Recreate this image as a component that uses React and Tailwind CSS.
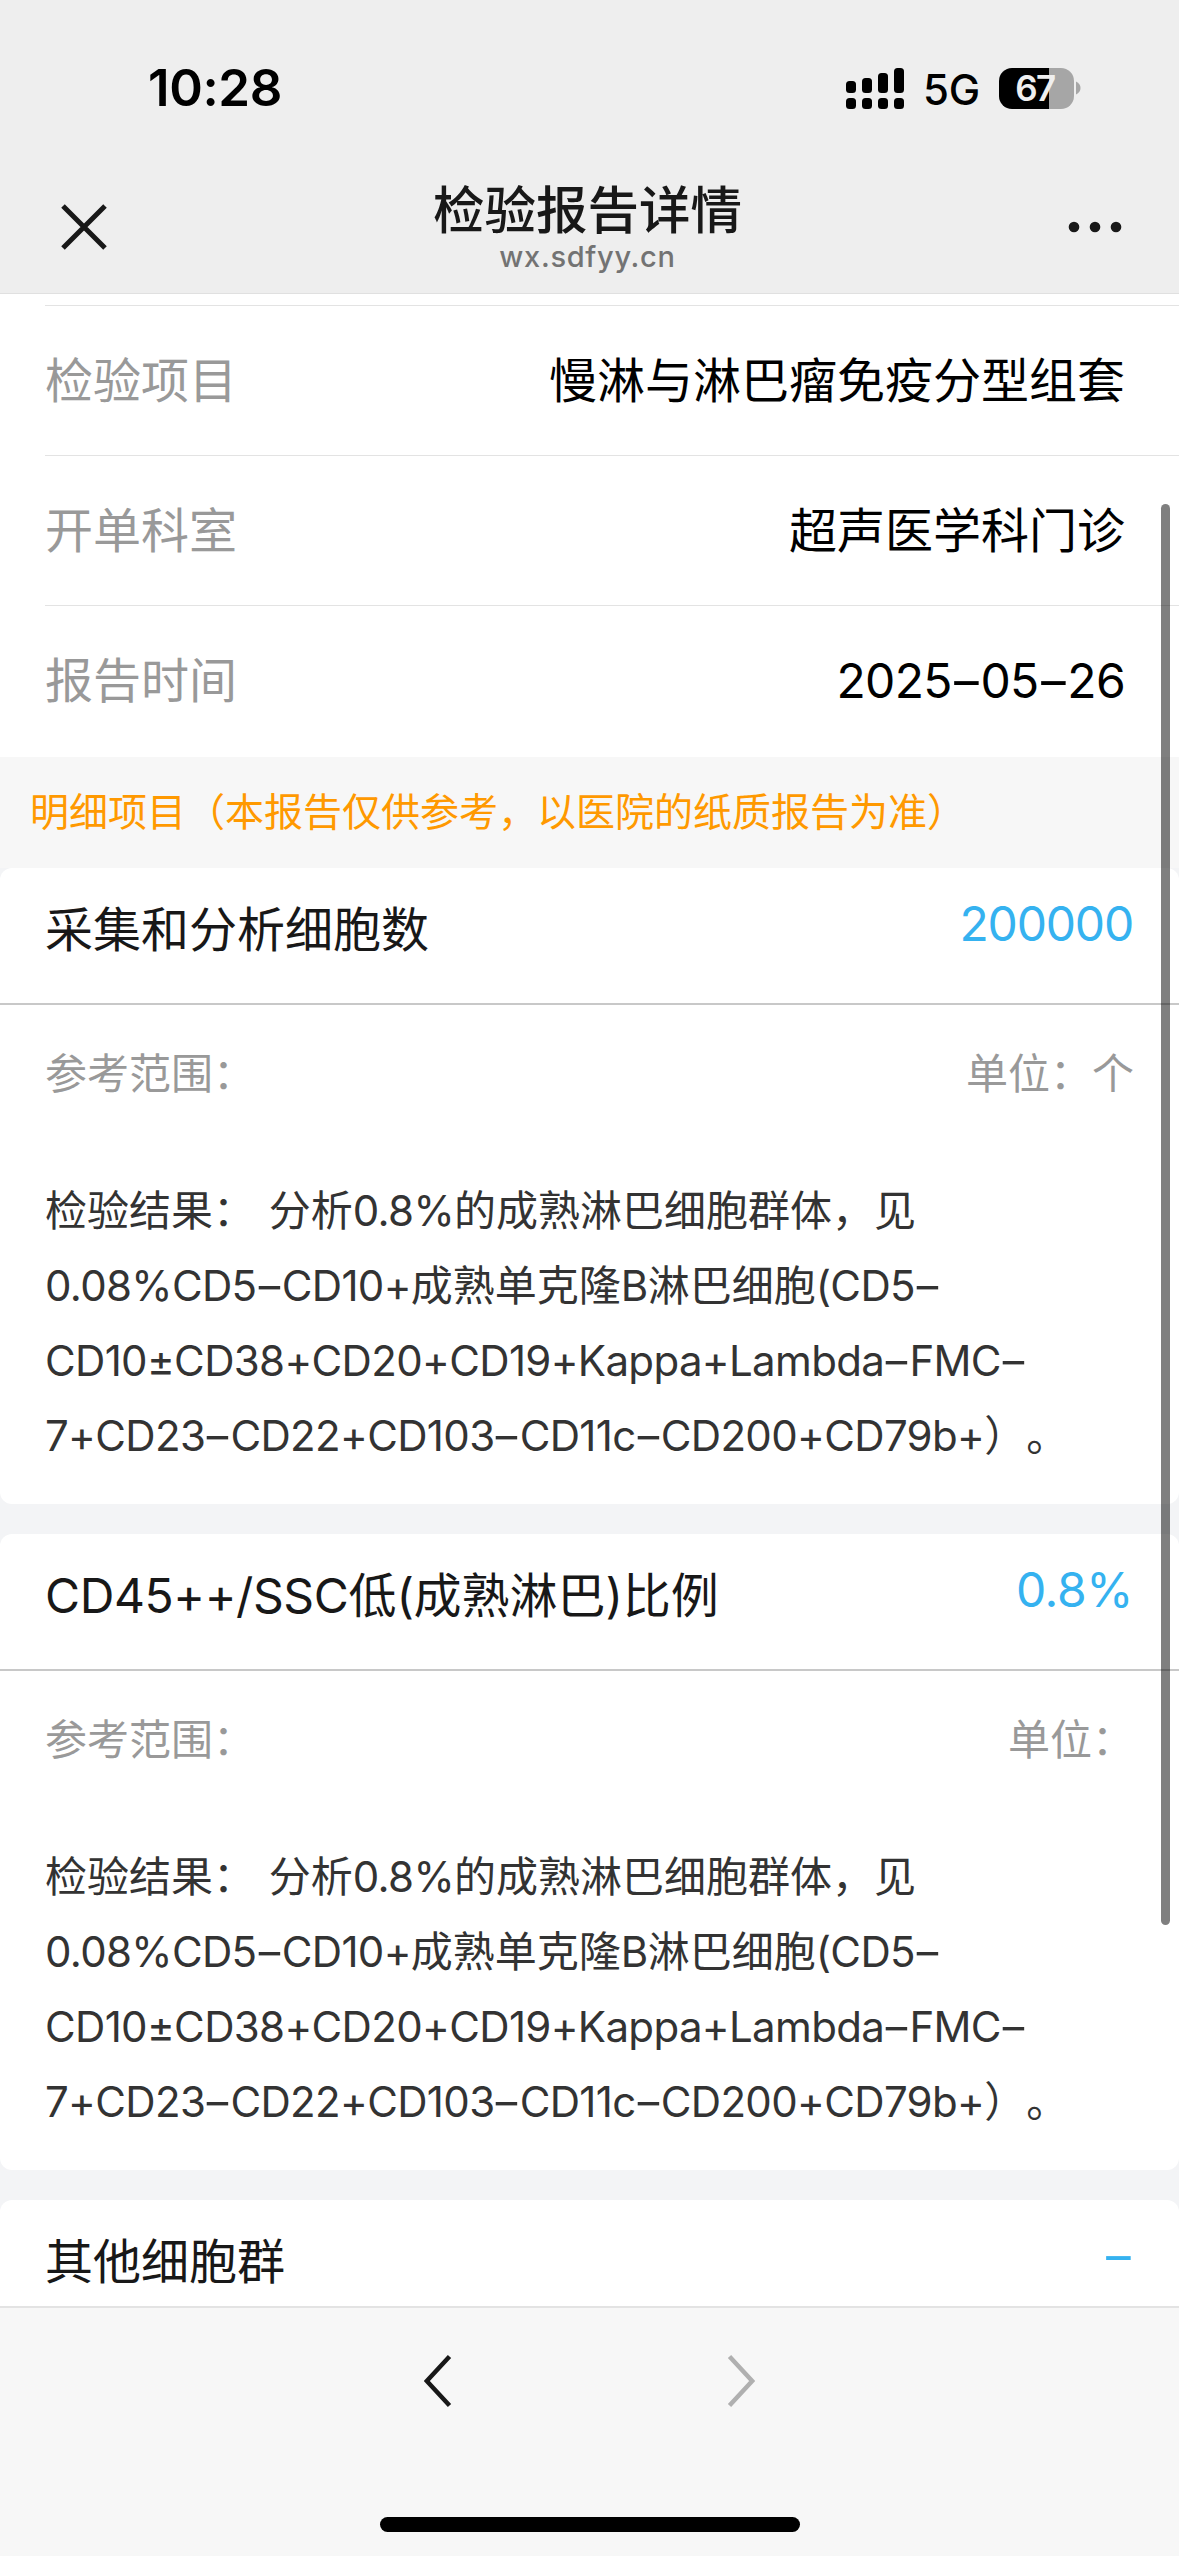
import React from "react";

const infoRows = [
  { label: "检验项目", value: "慢淋与淋巴瘤免疫分型组套" },
  { label: "开单科室", value: "超声医学科门诊" },
  { label: "报告时间", value: "2025-05-26" },
];

const resultLines = [
  "检验结果： 分析0.8%的成熟淋巴细胞群体，见",
  "0.08%CD5-CD10+成熟单克隆B淋巴细胞(CD5-",
  "CD10±CD38+CD20+CD19+Kappa+Lambda-FMC-",
  "7+CD23-CD22+CD103-CD11c-CD200+CD79b+）。",
];

const cards = [
  { name: "采集和分析细胞数", value: "200000", unit: "个", tight: "tracking-[-1.2px]" },
  { name: "CD45++/SSC低(成熟淋巴)比例", value: "0.8%", unit: "", tight: "tracking-[-0.4px]" },
];

// Latin runs get slightly tighter tracking; hyphens are drawn as wide as a digit.
function Mixed({ text, tight = "tracking-[-0.65px]" }) {
  return text.split(/(-|[!-,.-~±]+)/).map((part, i) => {
    if (part === "-") {
      return (
        <span key={i} className="inline-block w-[0.6em] scale-x-[1.6] text-center tracking-normal">
          -
        </span>
      );
    }
    return i % 2 ? (
      <span key={i} className={tight}>
        {part}
      </span>
    ) : (
      part
    );
  });
}

function StatusBar() {
  return (
    <div className="flex h-[168px] items-start pl-[148px] pr-[98px] pt-[56px]">
      <span className="text-[51px] font-semibold leading-[64px] tracking-[-0.4px] text-black">10:28</span>
      <div className="ml-auto flex h-[64px] items-center">
        <svg width="58" height="41" viewBox="0 0 58 41" className="block">
          <rect x="0" y="13" width="10" height="12" rx="3.5" />
          <rect x="16" y="10" width="10" height="15" rx="3.5" />
          <rect x="32" y="5" width="10" height="20" rx="3.5" />
          <rect x="48" y="0" width="10" height="25" rx="3.5" />
          <rect x="0" y="30" width="10" height="11" rx="3.5" />
          <rect x="16" y="30" width="10" height="11" rx="3.5" />
          <rect x="32" y="30" width="10" height="11" rx="3.5" />
          <rect x="48" y="30" width="10" height="11" rx="3.5" />
        </svg>
        <span className="ml-[19px] w-[57px] pt-[4px] text-[42px] font-[450] leading-[60px] tracking-[-0.3px] text-black">5G</span>
        <div className="ml-[19px] flex h-[41px] w-[75px] items-center justify-center rounded-[13px] bg-[linear-gradient(to_right,#000_50px,#a6a6a6_50px)]">
          <span className="pr-[3px] text-[35px] font-semibold leading-[41px] tracking-[-1.5px] text-[#efefef]">67</span>
        </div>
        <svg width="5" height="14" viewBox="0 0 5 14" className="ml-[2px] block">
          <path d="M0 0.5C6 3 6 11 0 13.5Z" fill="#a6a6a6" />
        </svg>
      </div>
    </div>
  );
}

function NavBar() {
  return (
    <div className="flex h-[125px] items-start justify-between px-[57px]">
      <svg width="54" height="54" viewBox="0 0 54 54" className="mt-[32px] block">
        <path d="M6 6L48 48M48 6L6 48" stroke="#181818" strokeWidth="5" fill="none" />
      </svg>
      <div className="flex flex-col items-center pr-[4px] pt-[9px]">
        <h1 className="text-[51.5px] font-medium leading-[66px] text-[#181818]">检验报告详情</h1>
        <span className="text-[29px] font-medium leading-[28px] tracking-[0.7px] text-[#737373]">wx.sdfyy.cn</span>
      </div>
      <svg width="54" height="54" viewBox="0 0 54 54" className="mt-[32px] block">
        <circle cx="6" cy="27" r="5.3" fill="#181818" />
        <circle cx="27" cy="27" r="5.3" fill="#181818" />
        <circle cx="48" cy="27" r="5.3" fill="#181818" />
      </svg>
    </div>
  );
}

function CardTitle({ name, value, tight }) {
  return (
    <div className="flex h-[135px] justify-between pl-[45px] pr-[46px]">
      <span className="pt-[29px] text-[48px] leading-[66px] text-[#181818]">
        <Mixed text={name} tight="tracking-[-0.4px]" />
      </span>
      <span className="pt-[23px] text-[48px] leading-[66px] text-[#35b2f0]">
        <Mixed text={value} tight={tight} />
      </span>
    </div>
  );
}

function Card({ name, value, unit, tight }) {
  return (
    <section className="mb-[30px] h-[636px] rounded-[12px] bg-white">
      <CardTitle name={name} value={value} tight={tight} />
      <div className="h-[2px] bg-[#c8c8c8]" />
      <div className="flex h-[138px] justify-between px-[45px] pt-[39px] text-[42px] leading-[60px] text-[#999]">
        <span>参考范围：</span>
        <span>单位：{unit}</span>
      </div>
      <div className="pl-[45px] pt-[30px] text-[42px] leading-[75px] text-[#333]">
        {resultLines.map((line) => (
          <div key={line} className="whitespace-pre [word-spacing:2px]">
            <Mixed text={line} />
          </div>
        ))}
      </div>
    </section>
  );
}

export default function App() {
  return (
    <div className="relative flex h-[2556px] w-[1179px] flex-col overflow-hidden bg-[#f3f4f6] font-['Inter','Noto_Sans_CJK_SC',sans-serif] font-[380] [text-spacing-trim:space-all]">
      <header className="h-[294px] shrink-0 border-b-1 border-[#e0e0e0] bg-[#eeeeee]">
        <StatusBar />
        <NavBar />
      </header>

      <main className="min-h-0 flex-1 overflow-hidden">
        <div className="h-[463px] bg-white pl-[45px] pt-[11px]">
          {infoRows.map((row) => (
            <div
              key={row.label}
              className="flex h-[150px] items-center justify-between border-t-1 border-[#e3e3e3] pr-[54px] text-[48px] leading-[66px]"
            >
              <span className="text-[#999]">{row.label}</span>
              <span className="text-black">
                <Mixed text={row.value} tight="tracking-[-0.7px]" />
              </span>
            </div>
          ))}
        </div>
        <div className="h-[111px] bg-[#f7f7f7] pl-[30px] pt-[25px] text-[39px] leading-[60px] text-[#ff9900]">
          明细项目（本报告仅供参考，以医院的纸质报告为准）
        </div>
        {cards.map((card) => (
          <Card key={card.name} {...card} />
        ))}
        <section className="rounded-t-[12px] bg-white">
          <CardTitle name="其他细胞群" value="-" />
        </section>
      </main>

      <footer className="flex h-[250px] shrink-0 flex-col items-center border-t-2 border-[#e3e3e3] bg-[#f7f7f7]">
        <div className="flex h-[209px] w-[331px] justify-between pt-[46px]">
          <svg width="28" height="54" viewBox="0 0 28 54" className="block">
            <path d="M25.5 2.5L2.8 27L25.5 51.5" stroke="#181818" strokeWidth="4.5" fill="none" />
          </svg>
          <svg width="28" height="54" viewBox="0 0 28 54" className="block">
            <path d="M2.5 2.5L25.2 27L2.5 51.5" stroke="#b0b0b0" strokeWidth="4.5" fill="none" />
          </svg>
        </div>
        <div className="h-[15px] w-[420px] rounded-full bg-black" />
      </footer>

      <div className="absolute left-[1161px] top-[504px] h-[1421px] w-[9px] rounded-full bg-black/50" />
    </div>
  );
}
